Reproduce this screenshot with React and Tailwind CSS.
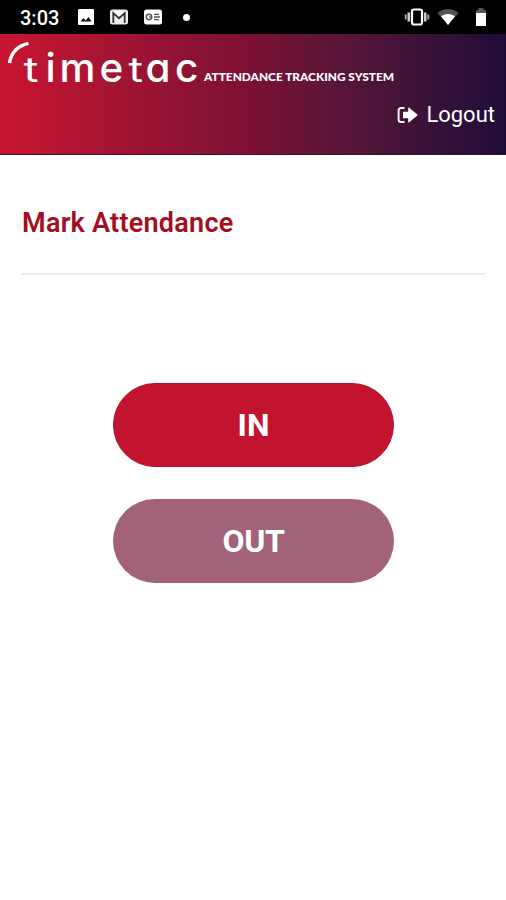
import React from "react";

const ImageIcon = () => (
  <svg width="18" height="18" viewBox="0 0 18 18">
    <rect x="1" y="1" width="16" height="16" rx="1" fill="#fff" />
    <path d="M3.5 13.5 6.5 10l2.2 2.6L11.5 9l3.2 4.5z" fill="#111" />
  </svg>
);

const MailIcon = () => (
  <svg width="20" height="18" viewBox="0 0 20 18">
    <rect x="1" y="1.5" width="18" height="15" rx="2.5" fill="#ededed" />
    <path
      d="M4.3 15V5l5.7 5.2L15.7 5v10"
      fill="none"
      stroke="#333"
      strokeWidth="1.8"
    />
    <path d="M4 3.5h12l-6 4.7z" fill="#fff" />
  </svg>
);

const NewsIcon = () => (
  <svg width="20" height="18" viewBox="0 0 20 18">
    <rect x="1" y="1.5" width="18" height="15" rx="2.5" fill="#fff" />
    <circle cx="6" cy="9" r="2.7" fill="none" stroke="#555" strokeWidth="1.5" />
    <path d="M6 9h3" stroke="#555" strokeWidth="1.3" />
    <path d="M11 6.4h5M11 9h6M11 11.6h5" stroke="#555" strokeWidth="1.3" />
  </svg>
);

const VibrateIcon = () => (
  <svg width="26" height="18" viewBox="0 0 26 18">
    <path d="M1.7 6.5v5M24.3 6.5v5" stroke="#aaa" strokeWidth="1.9" />
    <path d="M4.8 4.5v9M21.2 4.5v9" stroke="#ccc" strokeWidth="2.6" />
    <rect
      x="8"
      y="1.5"
      width="10"
      height="15"
      rx="2"
      fill="#000"
      stroke="#fff"
      strokeWidth="2.2"
    />
  </svg>
);

const WifiIcon = () => (
  <svg width="22" height="18" viewBox="0 0 22 18">
    <path d="M.5 5Q11-3 21.5 5L11 17z" fill="#555" />
    <path d="M4 8.2Q11 3.8 18 8.2L11 17z" fill="#fff" />
  </svg>
);

const BatteryIcon = () => (
  <svg width="12" height="19" viewBox="0 0 12 19">
    <path d="M3.5 0h5v2H11v4H1V2h2.5z" fill="#555" />
    <path d="M1 5h10v13H1z" fill="#fff" />
  </svg>
);

const LogoutIcon = () => (
  <svg width="21" height="18" viewBox="0 0 21 18">
    <path
      d="M7.5 2H4.2Q1.6 2 1.6 4.6v8.8Q1.6 16 4.2 16h3.3"
      fill="none"
      stroke="#fff"
      strokeWidth="1.9"
    />
    <path
      d="M6 5.8h5.2V2.2q0-1.2 1-.4l7.8 6.4q.9.8 0 1.6l-7.8 6.4q-1 .8-1-.4v-3.6H6z"
      fill="#fff"
    />
  </svg>
);

function Logo() {
  return (
    <svg width="400" height="60" viewBox="0 0 400 60" fill="#fff">
      <path
        d="M9.5 29Q12 13 28.5 9.3"
        fill="none"
        stroke="#fff"
        strokeWidth="3.4"
      />
      <g className="font-[Inter,sans-serif] font-medium [font-feature-settings:'cv11']">
        {/* the two t's are wider and lower than the rest of the wordmark */}
        <text
          className="font-normal"
          transform="translate(23.5 47.5) scale(1.35 1)"
          fontSize="34"
        >
          t
        </text>
        <text x="45.5 59.5 99.5" y="47.5" fontSize="40.5">
          ime
        </text>
        <text
          className="font-normal"
          transform="translate(128.5 47.5) scale(1.3 1)"
          fontSize="34"
        >
          t
        </text>
        <text x="145.5 175" y="47.5" fontSize="40.5">
          ac
        </text>
      </g>
      <text
        className="font-[Lato,sans-serif] font-black"
        x="204"
        y="47"
        fontSize="12"
        textLength="190"
        lengthAdjust="spacingAndGlyphs"
      >
        ATTENDANCE TRACKING SYSTEM
      </text>
    </svg>
  );
}

function StatusBar() {
  return (
    <div className="flex h-[34px] items-center justify-between bg-black pr-[19px] pl-5 text-white">
      <div className="flex items-center">
        <span className="w-[57px] pt-0.5 text-[20px] leading-none font-medium">
          3:03
        </span>
        <div className="flex items-center gap-[14px]">
          <ImageIcon />
          <MailIcon />
          <NewsIcon />
        </div>
        <span className="ml-5 size-[7px] rounded-full bg-white" />
      </div>
      <div className="flex items-center">
        <VibrateIcon />
        <span className="ml-[7px]">
          <WifiIcon />
        </span>
        <span className="ml-4">
          <BatteryIcon />
        </span>
      </div>
    </div>
  );
}

function Header() {
  return (
    <header className="h-[121px] border-b border-[#35152c] bg-linear-to-r from-[#c8152f] via-[#7a1033] to-[#1f0b38]">
      <Logo />
      <button className="mt-[9px] mr-[11px] ml-auto flex items-center gap-2 text-[22px] leading-6 text-white">
        <LogoutIcon />
        Logout
      </button>
    </header>
  );
}

function App() {
  return (
    <div className="h-[900px] w-[506px] overflow-hidden bg-white font-[Roboto,sans-serif]">
      <StatusBar />
      <Header />
      <main className="pt-[50px] pr-[21px] pl-[22px]">
        <h1 className="border-b-2 border-[#ececec] pb-8 text-[27px] leading-9 font-semibold tracking-[0.25px] text-[#a30e20]">
          Mark Attendance
        </h1>
        <div className="mt-[108px] flex flex-col items-center gap-8 text-[32px] font-bold text-white">
          <button className="h-[84px] w-[281px] rounded-full border border-[#b50d36] bg-[#c2142e]">
            IN
          </button>
          <button className="h-[84px] w-[281px] rounded-full bg-[#a2637a] tracking-[-0.3px]">
            OUT
          </button>
        </div>
      </main>
    </div>
  );
}

export default App;
